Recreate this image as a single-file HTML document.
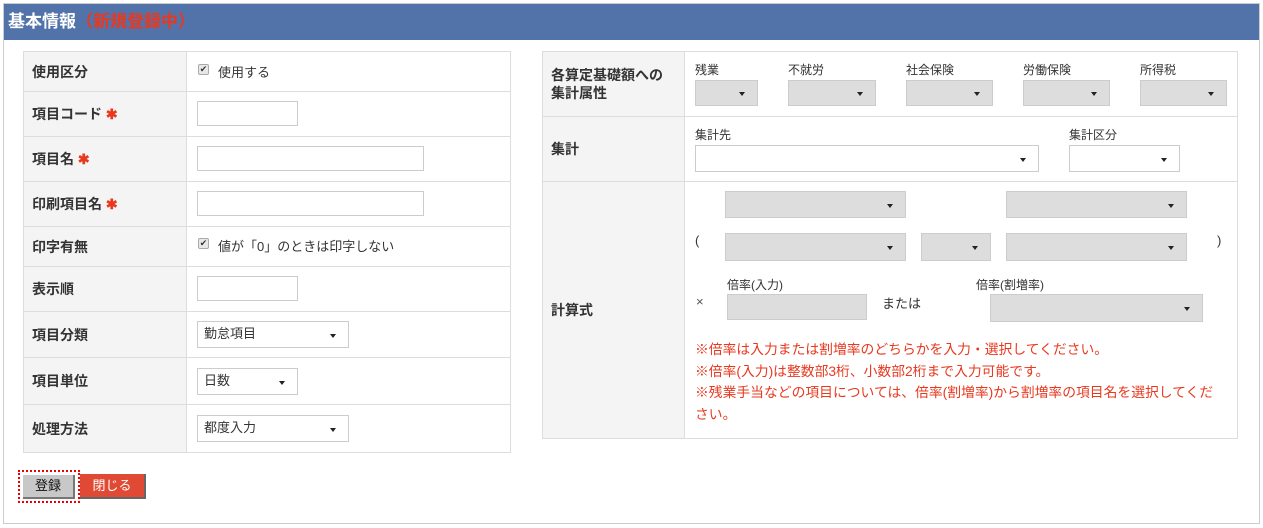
<!DOCTYPE html>
<html><head><meta charset="utf-8"><style>
*{margin:0;padding:0;box-sizing:border-box}
body{width:1263px;height:528px;background:#fff;font-family:"Liberation Sans","Noto Sans CJK JP",sans-serif;color:#333;position:relative;overflow:hidden}
.a{position:absolute}
.frame{left:3px;top:3px;width:1257px;height:521px;border:1px solid #ccc}
.hdr{left:4px;top:4px;width:1255px;height:36px;background:#5272aa;color:#fff;font-weight:bold;font-size:17px;line-height:36px;padding-left:4px}
.hdr span{color:#e8391f}
.lbl{background:#f4f4f4;border:1px solid #ddd;font-weight:bold;font-size:14px;display:flex;align-items:center;padding-left:8px}
.cell{border:1px solid #ddd}
.in{border:1px solid #ccc;background:#fff}
.sel{border:1px solid #ccc;background:#fff;font-size:13px;line-height:24px;padding-left:6px}
.sel.g{background:#ddd}
.sel::after{content:"";position:absolute;right:12px;top:50%;margin-top:-1px;border-left:3px solid transparent;border-right:3px solid transparent;border-top:4px solid #222}
.t{font-size:13px}
.s{font-size:12px}
.red{color:#e8391f}
</style></head><body>
<div class="a frame"></div>
<div class="a hdr">基本情報<span>（新規登録中）</span></div>

<div class="a lbl" style="left:23px;top:51px;width:164px;height:41px">使用区分</div><div class="a cell" style="left:186px;top:51px;width:325px;height:41px"></div>
<div class="a lbl" style="left:23px;top:91px;width:164px;height:46px">項目コード<span class="red">&nbsp;&#x2731;</span></div><div class="a cell" style="left:186px;top:91px;width:325px;height:46px"></div>
<div class="a lbl" style="left:23px;top:136px;width:164px;height:46px">項目名<span class="red">&nbsp;&#x2731;</span></div><div class="a cell" style="left:186px;top:136px;width:325px;height:46px"></div>
<div class="a lbl" style="left:23px;top:181px;width:164px;height:46px">印刷項目名<span class="red">&nbsp;&#x2731;</span></div><div class="a cell" style="left:186px;top:181px;width:325px;height:46px"></div>
<div class="a lbl" style="left:23px;top:226px;width:164px;height:41px">印字有無</div><div class="a cell" style="left:186px;top:226px;width:325px;height:41px"></div>
<div class="a lbl" style="left:23px;top:266px;width:164px;height:46px">表示順</div><div class="a cell" style="left:186px;top:266px;width:325px;height:46px"></div>
<div class="a lbl" style="left:23px;top:311px;width:164px;height:47px">項目分類</div><div class="a cell" style="left:186px;top:311px;width:325px;height:47px"></div>
<div class="a lbl" style="left:23px;top:357px;width:164px;height:48px">項目単位</div><div class="a cell" style="left:186px;top:357px;width:325px;height:48px"></div>
<div class="a lbl" style="left:23px;top:404px;width:164px;height:49px">処理方法</div><div class="a cell" style="left:186px;top:404px;width:325px;height:49px"></div>

<div class="a" style="left:198px;top:64px;width:11px;height:11px;border:1px solid #aaa;border-radius:2px;background:#e8e8e8;font-size:9px;line-height:9px;text-align:center">✔</div>
<div class="a t" style="left:218px;top:62px">使用する</div>
<div class="a in" style="left:197px;top:101px;width:101px;height:25px"></div>
<div class="a in" style="left:197px;top:146px;width:227px;height:25px"></div>
<div class="a in" style="left:197px;top:191px;width:227px;height:25px"></div>
<div class="a" style="left:198px;top:238px;width:11px;height:11px;border:1px solid #aaa;border-radius:2px;background:#e8e8e8;font-size:9px;line-height:9px;text-align:center">✔</div>
<div class="a t" style="left:218px;top:236px">値が「0」のときは印字しない</div>
<div class="a in" style="left:197px;top:276px;width:101px;height:25px"></div>
<div class="a sel" style="left:197px;top:321px;width:152px;height:27px">勤怠項目</div>
<div class="a sel" style="left:197px;top:368px;width:101px;height:27px">日数</div>
<div class="a sel" style="left:197px;top:415px;width:152px;height:27px">都度入力</div>

<div class="a lbl" style="left:542px;top:51px;width:143px;height:66px;line-height:18px">各算定基礎額への<br>集計属性</div><div class="a cell" style="left:684px;top:51px;width:554px;height:66px"></div>
<div class="a lbl" style="left:542px;top:116px;width:143px;height:66px">集計</div><div class="a cell" style="left:684px;top:116px;width:554px;height:66px"></div>
<div class="a lbl" style="left:542px;top:181px;width:143px;height:258px">計算式</div><div class="a cell" style="left:684px;top:181px;width:554px;height:258px"></div>

<div class="a s" style="left:695px;top:61px">残業</div>
<div class="a s" style="left:788px;top:61px">不就労</div>
<div class="a s" style="left:906px;top:61px">社会保険</div>
<div class="a s" style="left:1023px;top:61px">労働保険</div>
<div class="a s" style="left:1140px;top:61px">所得税</div>
<div class="a sel g" style="left:695px;top:80px;width:63px;height:26px"></div>
<div class="a sel g" style="left:788px;top:80px;width:88px;height:26px"></div>
<div class="a sel g" style="left:906px;top:80px;width:87px;height:26px"></div>
<div class="a sel g" style="left:1023px;top:80px;width:87px;height:26px"></div>
<div class="a sel g" style="left:1140px;top:80px;width:87px;height:26px"></div>

<div class="a s" style="left:695px;top:126px">集計先</div>
<div class="a s" style="left:1069px;top:126px">集計区分</div>
<div class="a sel" style="left:695px;top:145px;width:344px;height:27px"></div>
<div class="a sel" style="left:1069px;top:145px;width:111px;height:27px"></div>

<div class="a sel g" style="left:725px;top:191px;width:181px;height:27px"></div>
<div class="a sel g" style="left:1006px;top:191px;width:181px;height:27px"></div>
<div class="a t" style="left:695px;top:233px">(</div>
<div class="a t" style="left:1217px;top:233px">)</div>
<div class="a sel g" style="left:725px;top:233px;width:181px;height:28px"></div>
<div class="a sel g" style="left:921px;top:233px;width:70px;height:28px"></div>
<div class="a sel g" style="left:1006px;top:233px;width:181px;height:28px"></div>
<div class="a s" style="left:727px;top:276px">倍率(入力)</div>
<div class="a s" style="left:976px;top:276px">倍率(割増率)</div>
<div class="a t" style="left:696px;top:294px;color:#555">×</div>
<div class="a" style="left:727px;top:294px;width:140px;height:26px;background:#ddd;border:1px solid #ccc"></div>
<div class="a t" style="left:882px;top:293px">または</div>
<div class="a sel g" style="left:990px;top:294px;width:213px;height:28px"></div>
<div class="a red" style="left:695px;top:339px;line-height:21.5px;font-size:13.8px;white-space:nowrap">※倍率は入力または割増率のどちらかを入力・選択してください。<br>※倍率(入力)は整数部3桁、小数部2桁まで入力可能です。<br>※残業手当などの項目については、倍率(割増率)から割増率の項目名を選択してくだ<br>さい。</div>

<div class="a" style="left:18px;top:470px;width:62px;height:33px;border:2px dotted #e00"></div>
<div class="a" style="left:23px;top:475px;width:52px;height:24px;background:#c8c8c8;border-bottom:2px solid #777;border-right:2px solid #777;font-size:13px;line-height:22px;text-align:center;color:#111">登録</div>
<div class="a" style="left:80px;top:474px;width:66px;height:25px;background:#e04a34;border-bottom:2px solid #666;border-right:2px solid #666;font-size:13px;line-height:23px;text-align:center;color:#fff">閉じる</div>
</body></html>
